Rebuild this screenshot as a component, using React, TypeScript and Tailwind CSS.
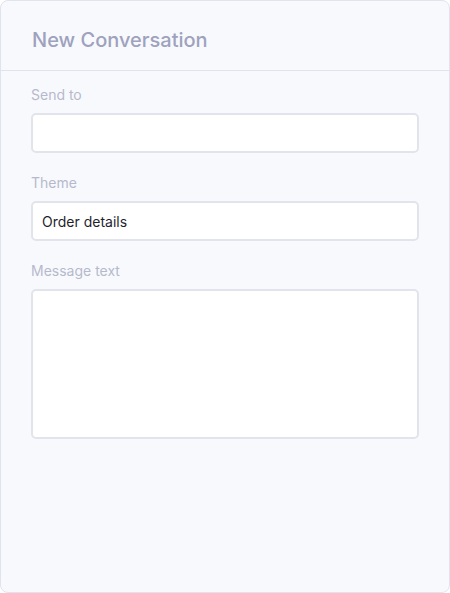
export default function App() {
  return (
    <div className="h-[593px] w-[450px] font-['Inter','Liberation_Sans',sans-serif]">
      <div className="flex h-full flex-col rounded-[8px] border border-[#e1e3ef] bg-[#f8f9fd]">
        <div className="flex h-[70px] items-center border-b border-[#e1e3ef] px-[31px] pt-[8px]">
          <h2 className="text-[20px] font-medium text-[#9ea2bd]">New Conversation</h2>
        </div>
        <div className="flex flex-col px-[30px] pt-[15px]">
          <label className="text-[14px] leading-[18px] text-[#b6b9cc]">Send to</label>
          <input className="mt-[9px] h-[40px] rounded-[5px] border-2 border-[#e2e4ec] bg-white px-[10px] text-[14px] text-[#1f1f2e] outline-none" />
          <label className="mt-[21px] text-[14px] leading-[18px] text-[#b6b9cc]">Theme</label>
          <input
            className="mt-[9px] h-[40px] rounded-[5px] border-2 border-[#e2e4ec] bg-white px-[9px] text-[14px] text-[#1f1f2e] outline-none"
            defaultValue="Order details"
          />
          <label className="mt-[21px] text-[14px] leading-[18px] text-[#b6b9cc]">Message text</label>
          <textarea className="mt-[9px] h-[150px] resize-none rounded-[5px] border-2 border-[#e2e4ec] bg-white px-[10px] py-[8px] text-[14px] outline-none" />
        </div>
      </div>
    </div>
  );
}
